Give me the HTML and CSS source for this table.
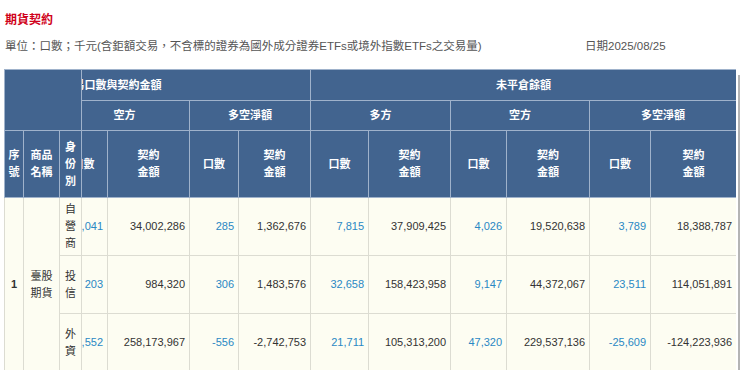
FILE: index.html
```html
<!DOCTYPE html>
<html lang="zh-Hant">
<head>
    <meta charset="UTF-8">
    <meta name="viewport" content="width=device-width, initial-scale=1.0">
    <title>期貨契約</title>
    <link rel="stylesheet" href="styles.css">
</head>
<body>
<div class="page">
    <h1 class="title">期貨契約</h1>
    <div class="unit-line">
        <span>單位：口數；千元(含鉅額交易，不含標的證券為國外成分證券ETFs或境外指數ETFs之交易量)</span>
        <span class="date">日期2025/08/25</span>
    </div>

    <div class="board">
        <!-- 固定欄位 -->
        <table class="fixed-part">
            <colgroup><col><col><col></colgroup>
            <tr class="h-top"><th colspan="3"></th></tr>
            <tr class="h-sub">
                <th>序<br>號</th>
                <th>商品<br>名稱</th>
                <th>身<br>份<br>別</th>
            </tr>
            <tr class="d1">
                <td rowspan="3" class="seq">1</td>
                <td rowspan="3" class="name">臺股<br>期貨</td>
                <td class="who">自<br>營<br>商</td>
            </tr>
            <tr class="d2"><td class="who">投<br>信</td></tr>
            <tr class="d3"><td class="who">外<br>資</td></tr>
        </table>

        <!-- 可捲動欄位 -->
        <div class="scroll-part">
            <table class="data">
                <colgroup>
                    <col><col><col><col><col><col><col><col><col><col><col><col>
                </colgroup>
                <tr class="g1">
                    <th colspan="6">交易口數與契約金額</th>
                    <th colspan="6">未平倉餘額</th>
                </tr>
                <tr class="g2">
                    <th colspan="2">多方</th>
                    <th colspan="2">空方</th>
                    <th colspan="2">多空淨額</th>
                    <th colspan="2">多方</th>
                    <th colspan="2">空方</th>
                    <th colspan="2">多空淨額</th>
                </tr>
                <tr class="h-sub">
                    <th>口數</th><th>契約<br>金額</th>
                    <th>口數</th><th>契約<br>金額</th>
                    <th>口數</th><th>契約<br>金額</th>
                    <th>口數</th><th>契約<br>金額</th>
                    <th>口數</th><th>契約<br>金額</th>
                    <th>口數</th><th>契約<br>金額</th>
                </tr>
                <tr class="d1">
                    <td class="qty">8,326</td><td>35,364,962</td>
                    <td class="qty">8,041</td><td>34,002,286</td>
                    <td class="qty">285</td><td>1,362,676</td>
                    <td class="qty">7,815</td><td>37,909,425</td>
                    <td class="qty">4,026</td><td>19,520,638</td>
                    <td class="qty">3,789</td><td>18,388,787</td>
                </tr>
                <tr class="d2">
                    <td class="qty">509</td><td>2,467,896</td>
                    <td class="qty">203</td><td>984,320</td>
                    <td class="qty">306</td><td>1,483,576</td>
                    <td class="qty">32,658</td><td>158,423,958</td>
                    <td class="qty">9,147</td><td>44,372,067</td>
                    <td class="qty">23,511</td><td>114,051,891</td>
                </tr>
                <tr class="d3">
                    <td class="qty">60,996</td><td>255,431,214</td>
                    <td class="qty">61,552</td><td>258,173,967</td>
                    <td class="qty">-556</td><td>-2,742,753</td>
                    <td class="qty">21,711</td><td>105,313,200</td>
                    <td class="qty">47,320</td><td>229,537,136</td>
                    <td class="qty">-25,609</td><td>-124,223,936</td>
                </tr>
            </table>
        </div>
        <div class="scrollbar"></div>
    </div>
</div>
</body>
</html>
```

FILE: styles.css
```css
html,
body {
    margin: 0;
    overflow: hidden;
}

body {
    background-color: #fff;
    color: #333;
    font-family: "Liberation Sans", "Noto Sans CJK TC", sans-serif;
}

.page {
    padding: 11px 0 0 4px;
}

.title {
    margin: 0 0 0 1px;
    font-size: 12px;
    line-height: 18px;
    font-weight: bold;
    color: #d0021b;
}

.unit-line {
    display: grid;
    grid-template-columns: 580px auto;
    margin: 8px 0 14px 1px;
    font-size: 11.5px;
    line-height: 18px;
    color: #555;
}

/* 表格區 */
.board {
    display: flex;
    align-items: flex-start;
}

table {
    border-collapse: collapse;
    table-layout: fixed;
    font-size: 11px;
    line-height: 17px;
}

th {
    background-color: #42648f;
    color: #fff;
    font-weight: bold;
    text-align: center;
    border: 1px solid #9fb2cb;
    padding: 0 2px;
}

td {
    background-color: #fdfdf2;
    border: 1px solid #dcdcd2;
    padding: 0 4px;
    text-align: right;
    color: #333;
}

td.qty {
    color: #2a88c4;
}

.fixed-part {
    width: 77px;
    flex: none;
}

.fixed-part col:nth-child(1) { width: 19px; }
.fixed-part col:nth-child(2) { width: 36px; }
.fixed-part col:nth-child(3) { width: 22px; }

.fixed-part th,
.fixed-part td {
    padding: 0;
}

.fixed-part .h-top {
    height: 61px;
}

.fixed-part td {
    text-align: center;
}

.fixed-part td.seq {
    font-weight: bold;
}

.scroll-part {
    width: 654px;
    overflow: hidden;
    flex: none;
}

.data {
    width: 823px;
    margin-left: -169px;
}

.data col:nth-child(1) { width: 60px; }
.data col:nth-child(2) { width: 86px; }
.data col:nth-child(3) { width: 48px; }
.data col:nth-child(4) { width: 82px; }
.data col:nth-child(5) { width: 49px; }
.data col:nth-child(6) { width: 72px; }
.data col:nth-child(7) { width: 58px; }
.data col:nth-child(8) { width: 82px; }
.data col:nth-child(9) { width: 56px; }
.data col:nth-child(10) { width: 83px; }
.data col:nth-child(11) { width: 61px; }
.data col:nth-child(12) { width: 86px; }

.g1 { height: 31px; }
.g2 { height: 30px; }
.h-sub { height: 67px; }
.d1 { height: 58px; }
.d2 { height: 58px; }
.d3 { height: 58px; }

.scrollbar {
    flex: none;
    width: 2px;
    height: 300px;
    margin: 6px 0 0 2px;
    background-color: #b4b4b4;
}
```
